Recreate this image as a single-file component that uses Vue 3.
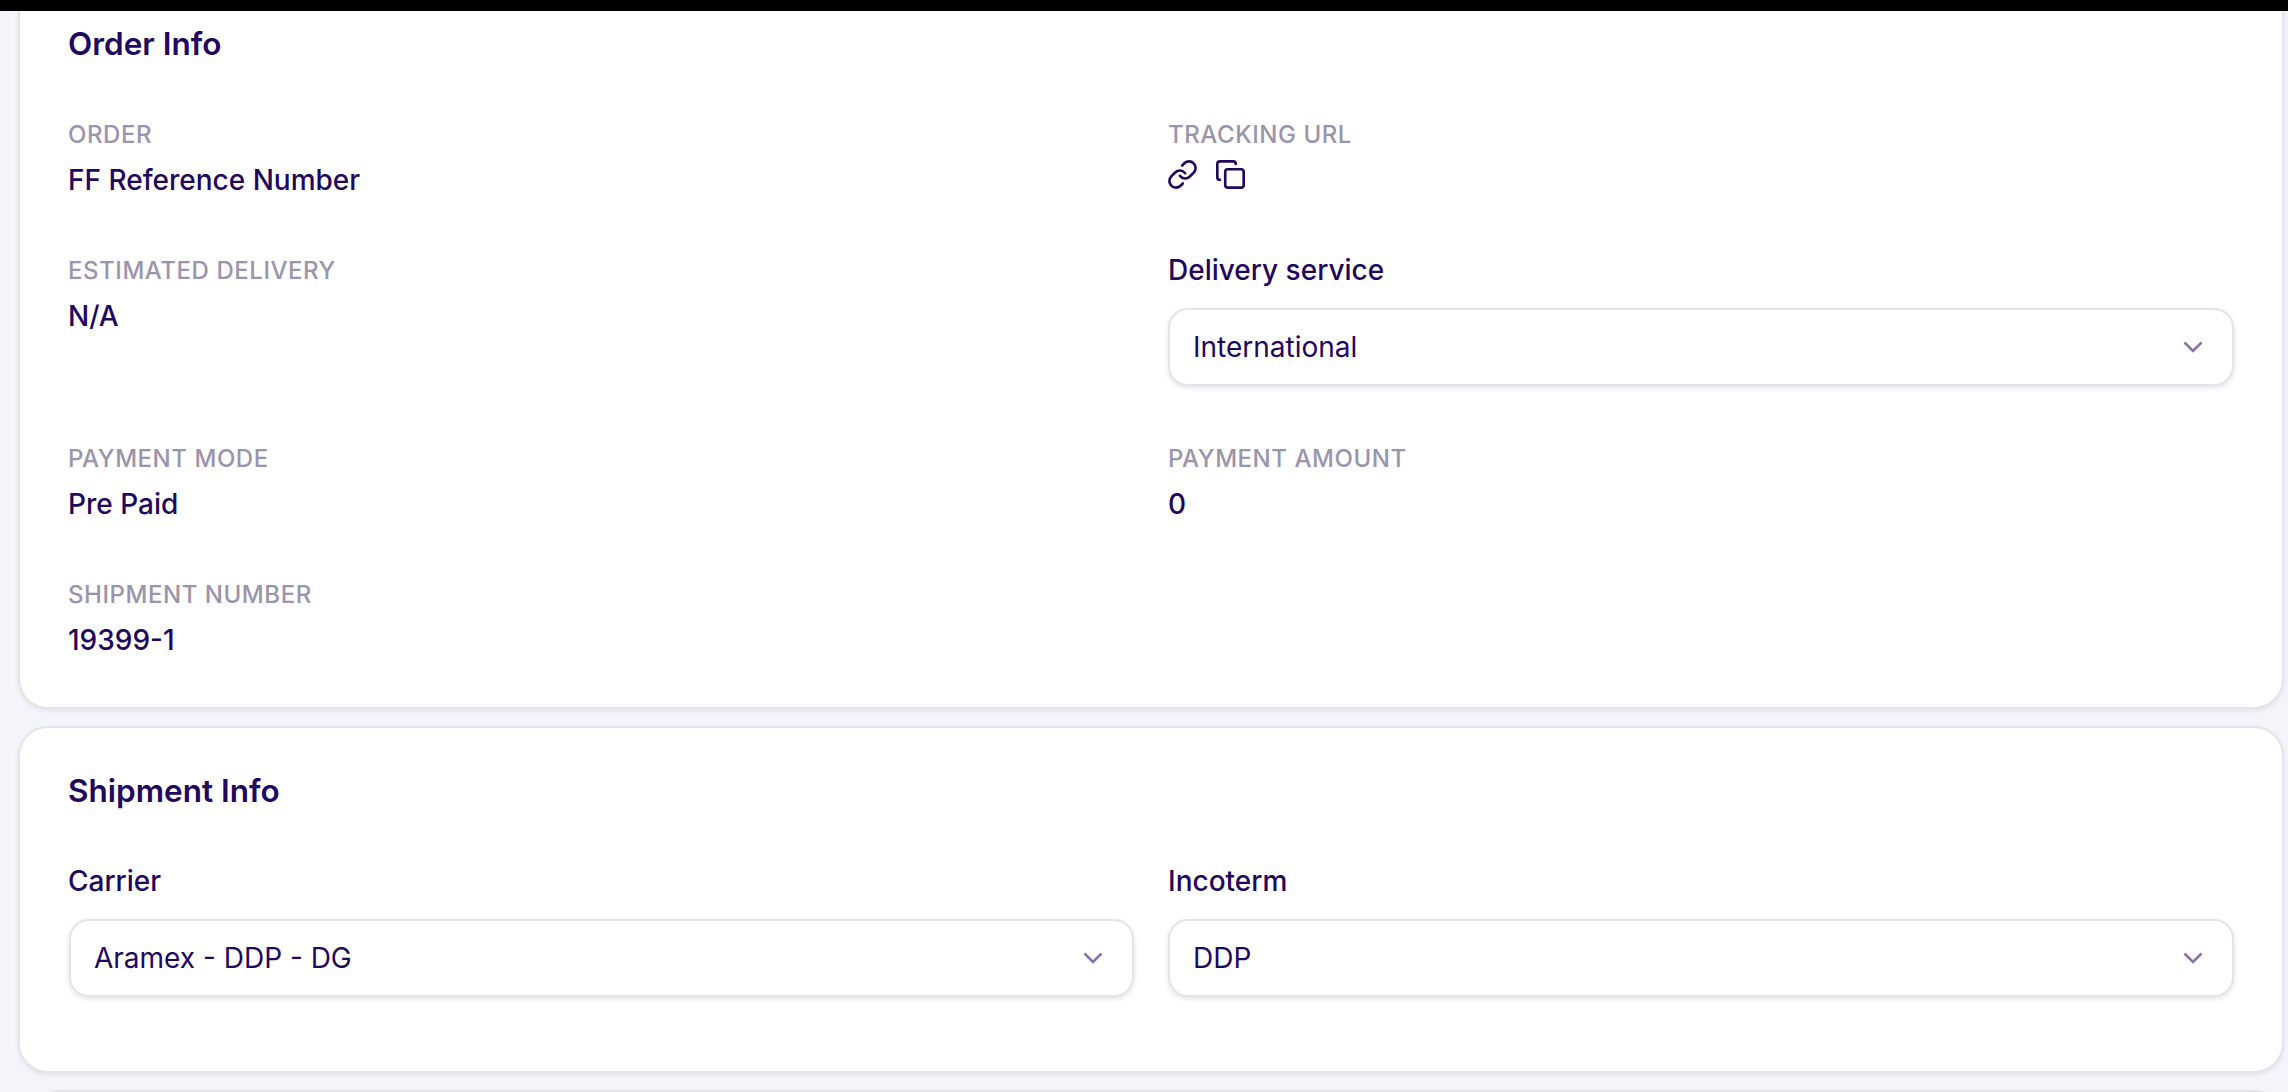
<template>
  <div class="page">
    <div class="topbar"></div>

    <section class="card card-order">
      <h2 class="card-title">Order Info</h2>
      <div class="grid">
        <div class="field">
          <div class="label">Order</div>
          <div class="value">FF Reference Number</div>
        </div>
        <div class="field">
          <div class="label">Tracking URL</div>
          <div class="icons">
            <svg class="icon" viewBox="1 1 22 22" fill="none" stroke="currentColor" stroke-width="2" stroke-linecap="round" stroke-linejoin="round">
              <path d="M10 13a5 5 0 0 0 7.54.54l3-3a5 5 0 0 0-7.07-7.07l-1.72 1.71" />
              <path d="M14 11a5 5 0 0 0-7.54-.54l-3 3a5 5 0 0 0 7.07 7.07l1.71-1.71" />
            </svg>
            <svg class="icon" viewBox="1 1 22 22" fill="none" stroke="currentColor" stroke-width="2" stroke-linecap="round" stroke-linejoin="round">
              <rect x="8" y="8" width="14" height="14" rx="2" />
              <path d="M4 16c-1.100 0-2-.9-2-2V4c0-1.100.9-2 2-2h10c1.100 0 2 .9 2 2" />
            </svg>
          </div>
        </div>
        <div class="field">
          <div class="label">Estimated Delivery</div>
          <div class="value">N/A</div>
        </div>
        <div class="field field-select">
          <div class="select-label">Delivery service</div>
          <div class="select">
            <span>International</span>
            <svg class="chevron" viewBox="0 0 20 12" fill="none" stroke="currentColor" stroke-width="2.6">
              <path d="M1.500 1.500 10 10l8.500-8.500" />
            </svg>
          </div>
        </div>
        <div class="field">
          <div class="label">Payment Mode</div>
          <div class="value">Pre Paid</div>
        </div>
        <div class="field">
          <div class="label">Payment Amount</div>
          <div class="value">0</div>
        </div>
        <div class="field">
          <div class="label">Shipment Number</div>
          <div class="value">19399-1</div>
        </div>
      </div>
    </section>

    <section class="card card-shipment">
      <h2 class="card-title">Shipment Info</h2>
      <div class="grid">
        <div class="field">
          <div class="select-label">Carrier</div>
          <div class="select select-inset">
            <span>Aramex - DDP - DG</span>
            <svg class="chevron" viewBox="0 0 20 12" fill="none" stroke="currentColor" stroke-width="2.6">
              <path d="M1.500 1.500 10 10l8.500-8.500" />
            </svg>
          </div>
        </div>
        <div class="field">
          <div class="select-label">Incoterm</div>
          <div class="select">
            <span>DDP</span>
            <svg class="chevron" viewBox="0 0 20 12" fill="none" stroke="currentColor" stroke-width="2.6">
              <path d="M1.500 1.500 10 10l8.500-8.500" />
            </svg>
          </div>
        </div>
      </div>
    </section>

    <section class="card card-next"></section>
  </div>
</template>

<script setup>
</script>

<style>
html,
body {
  margin: 0;
  background: #f4f5fb;
  overflow: hidden;
}
</style>

<style scoped>
.page {
  height: 1092px;
  overflow: hidden;
  padding: 0 4px 0 18px;
  box-sizing: border-box;
  background: #f4f5fb;
  font-family: Inter, "Noto Sans", sans-serif;
  color: #22075e;
}

.topbar {
  height: 11px;
  margin: 0 -4px 0 -18px;
  background: #000;
}

.card {
  box-sizing: border-box;
  background: #fff;
  border: 2px solid #e5e5e9;
  border-radius: 30px;
  box-shadow: 0 2px 4px rgba(30, 20, 60, 0.08);
  padding-left: 48px;
  padding-right: 48px;
}

.card-order {
  border-top: 0;
  border-top-left-radius: 0;
  border-top-right-radius: 0;
  padding-top: 15px;
  height: 698px;
}

.card-shipment {
  margin-top: 17px;
  padding-top: 45px;
  height: 347px;
}

.card-next {
  margin: 17px 0 0 12px;
  height: 60px;
}

.card-title {
  margin: 0 0 58px;
  font-size: 31.5px;
  line-height: 36px;
  font-weight: 600;
}

.grid {
  display: grid;
  grid-template-columns: 1fr 1fr;
  column-gap: 34px;
  row-gap: 56px;
}

.label {
  font-size: 24px;
  line-height: 30px;
  font-weight: 500;
  letter-spacing: 0.55px;
  text-transform: uppercase;
  color: #9a94ac;
  margin-bottom: 10px;
}

.value {
  font-size: 28px;
  line-height: 40px;
  font-weight: 500;
}

.icons {
  display: flex;
  gap: 19px;
  margin-top: 2px;
}

.icon {
  width: 29px;
  height: 29px;
  display: block;
}

.field-select {
  padding-bottom: 2px;
}

.select-label {
  font-size: 28px;
  line-height: 29px;
  font-weight: 500;
  margin-bottom: 23px;
}

.select {
  box-sizing: border-box;
  height: 78px;
  display: flex;
  align-items: center;
  justify-content: space-between;
  padding: 0 29px 0 23px;
  background: #fff;
  border: 2px solid #e5e5e9;
  border-radius: 20px;
  box-shadow: 0 2px 5px rgba(30, 20, 60, 0.12);
  font-size: 28px;
}

.select-inset {
  margin-left: 1px;
}

.chevron {
  width: 20px;
  height: 12px;
  color: #8674a8;
}
</style>
